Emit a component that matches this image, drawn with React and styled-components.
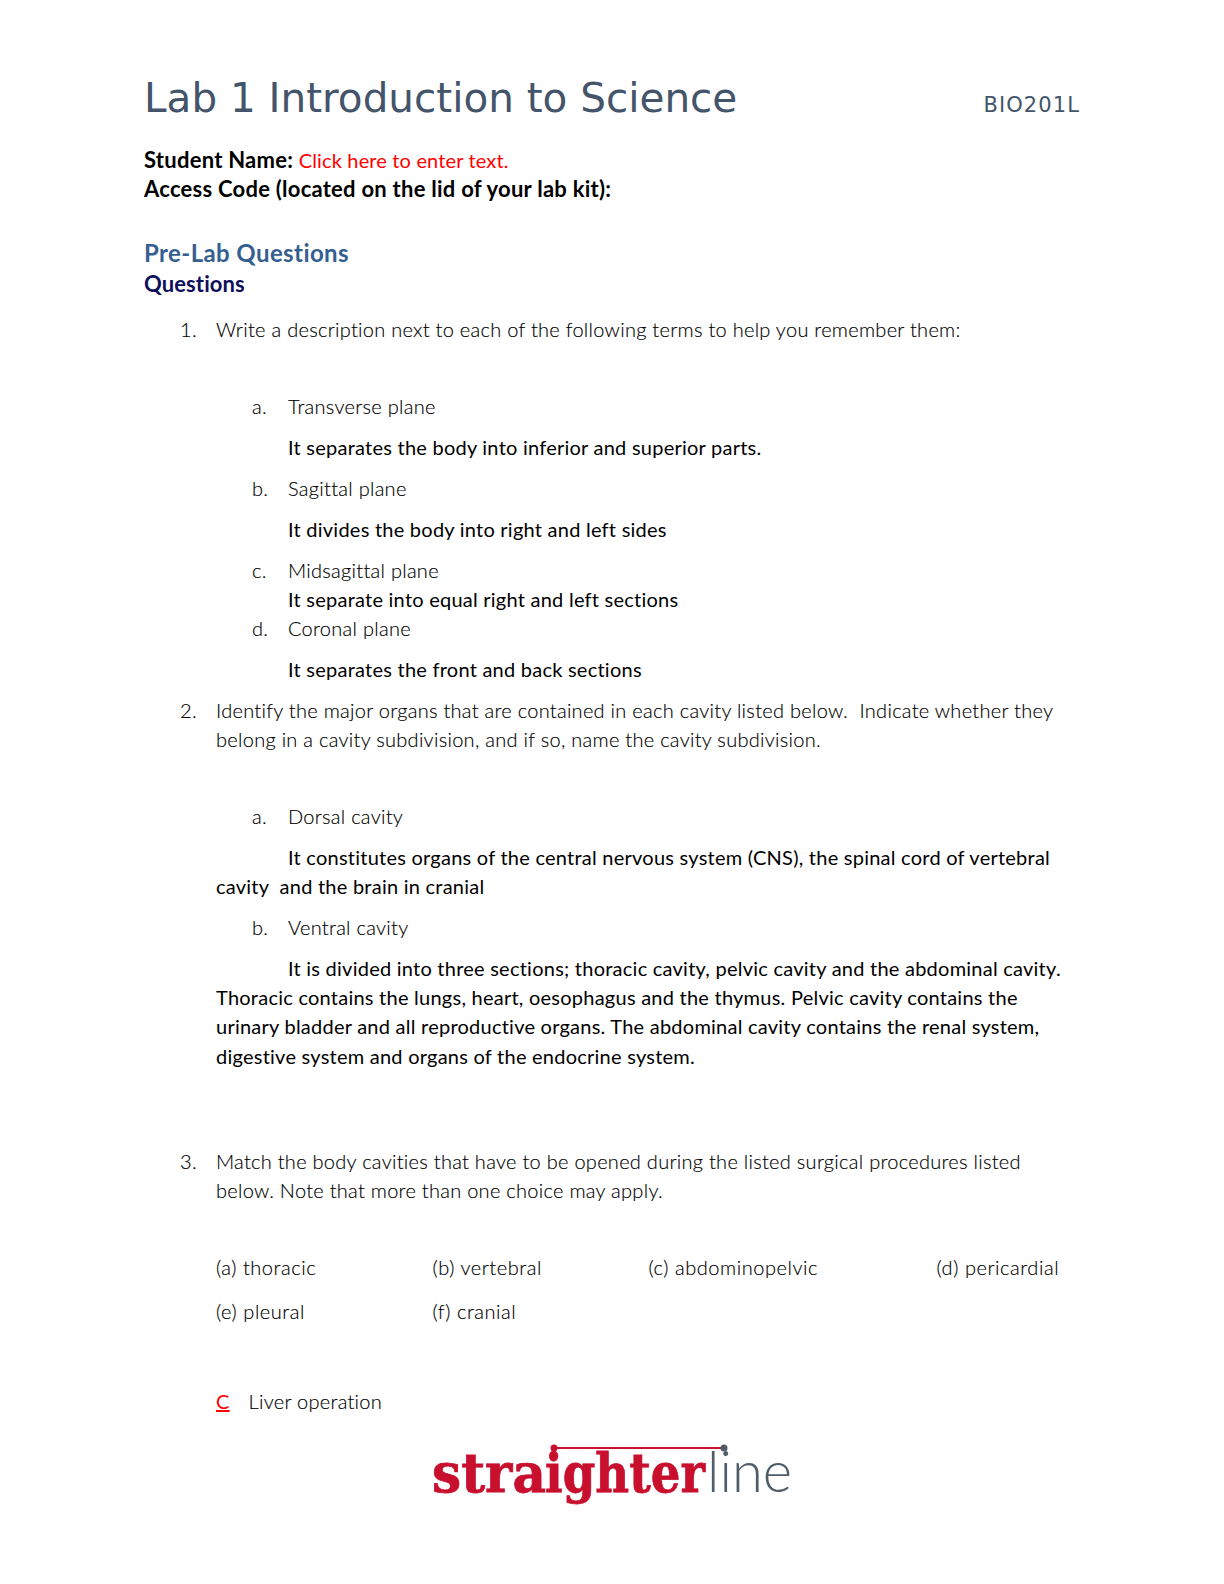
import styled, { createGlobalStyle } from "styled-components";

const GlobalStyle = createGlobalStyle`
  html, body {
    margin: 0;
    padding: 0;
    background: #fff;
  }
  body {
    font-family: "Lato", "Liberation Sans", sans-serif;
    color: #000;
  }
`;

const Page = styled.div`
  width: 1224px;
  height: 1584px;
  box-sizing: border-box;
  padding: 70px 144px 0 144px;
  overflow: hidden;
`;

const Header = styled.header`
  display: flex;
  justify-content: space-between;
  align-items: flex-end;
  height: 56px;
  margin-bottom: 19px;
`;

const Title = styled.h1`
  margin: 0;
  font: 400 40.5px/56px "DejaVu Sans", sans-serif;
  color: #44546a;
`;

const Course = styled.span`
  font: 400 21px/42px "DejaVu Sans", sans-serif;
  letter-spacing: 1.1px;
  color: #44546a;
`;

const Line = styled.div`
  height: 29.3px;
  line-height: 29.3px;
  font-size: 20px;
  white-space: nowrap;
  margin-top: ${(p) => p.$top || 0}px;
`;

const Strong = styled(Line)`
  font-size: 22px;
  font-weight: 700;
  letter-spacing: 0.25px;
`;

const Placeholder = styled.span`
  font-size: 20px;
  font-weight: 400;
  color: #f00;
  letter-spacing: 0.15px;
`;

const Section = styled(Strong)`
  font-size: 24px;
  letter-spacing: 0.4px;
  color: #365f91;
`;

const Sub = styled(Strong)`
  letter-spacing: 0.1px;
  color: #0f0f5c;
`;

const Item = styled(Line)`
  display: flex;
  font-weight: 300;
  letter-spacing: 0.28px;
  -webkit-text-stroke: 0.15px #000;
  padding-left: ${(p) => (p.$sub ? 108 : 36)}px;
`;

const Marker = styled.span`
  width: 36px;
  flex: none;
`;

const Answer = styled.div`
  margin-top: ${(p) => p.$top || 0}px;
  padding-left: 72px;
  font-size: 20px;
  line-height: 29.3px;
  white-space: nowrap;
  letter-spacing: 0.24px;
  text-indent: ${(p) => (p.$indent ? 72 : 0)}px;
`;

const SubAnswer = styled(Answer)`
  padding-left: 144px;
`;

const ChoiceGrid = styled.div`
  display: grid;
  grid-template-columns: 216.5px 216px 288px auto;
  row-gap: 14px;
  margin: ${(p) => p.$top || 0}px 0 0 72px;
  font-size: 20px;
  line-height: 29.3px;
  font-weight: 300;
  letter-spacing: 0.55px;
  -webkit-text-stroke: 0.15px #000;
`;

const Pick = styled.div`
  display: flex;
  margin: 61px 0 0 72px;
  font-size: 20px;
  line-height: 29.3px;
  font-weight: 300;
  letter-spacing: 0.28px;
  -webkit-text-stroke: 0.15px #000;
`;

const PickLetter = styled.span`
  width: 32.5px;
  font-weight: 400;
  color: #f00;
  -webkit-text-stroke: 0;
  text-decoration: underline;
`;

const Logo = styled.svg`
  display: block;
  margin: 28px 0 0 286px;
  overflow: visible;
`;

const Wordmark = () => (
  <Logo width="364" height="68" viewBox="0 0 364 68">
    <line x1="124" y1="4" x2="294" y2="4" stroke="#c8102e" strokeWidth="2" />
    <circle cx="124" cy="4" r="3.5" fill="#c8102e" />
    <circle cx="294" cy="4" r="3.5" fill="#4e5d68" />
    <text y="48" fontFamily="DejaVu Serif" fontWeight="700" fontSize="55" fill="#c8102e" stroke="#c8102e" strokeWidth="0.8">
      <tspan x="2" textLength="114" lengthAdjust="spacingAndGlyphs">stra</tspan>
      <tspan x="115" textLength="160" lengthAdjust="spacingAndGlyphs">ighter</tspan>
    </text>
    <text x="277" y="48" fontFamily="Lato" fontWeight="300" fontSize="57" fill="#4e5d68" textLength="85" lengthAdjust="spacingAndGlyphs">line</text>
  </Logo>
);

export default function App() {
  return (
    <>
      <GlobalStyle />
      <Page>
        <Header>
          <Title>Lab 1 Introduction to Science</Title>
          <Course>BIO201L</Course>
        </Header>
        <Strong>
          Student Name: <Placeholder>Click here to enter text.</Placeholder>
        </Strong>
        <Strong>Access Code (located on the lid of your lab kit):</Strong>
        <Section $top={34}>Pre-Lab Questions</Section>
        <Sub $top={2}>Questions</Sub>

        <Item $top={17}><Marker>1.</Marker>Write a description next to each of the following terms to help you remember them:</Item>

        <Item $sub $top={48}><Marker>a.</Marker>Transverse plane</Item>
        <SubAnswer $top={11}>It separates the body into inferior and superior parts.</SubAnswer>
        <Item $sub $top={12}><Marker>b.</Marker>Sagittal plane</Item>
        <SubAnswer $top={12}>It divides the body into right and left sides</SubAnswer>
        <Item $sub $top={11}><Marker>c.</Marker>Midsagittal plane</Item>
        <SubAnswer>It separate into equal right and left sections</SubAnswer>
        <Item $sub><Marker>d.</Marker>Coronal plane</Item>
        <SubAnswer $top={11}>It separates the front and back sections</SubAnswer>

        <Item $top={12}><Marker>2.</Marker>Identify the major organs that are contained in each cavity listed below.&nbsp; Indicate whether they</Item>
        <Item><Marker />belong in a cavity subdivision, and if so, name the cavity subdivision.</Item>

        <Item $sub $top={48}><Marker>a.</Marker>Dorsal cavity</Item>
        <Answer $top={11} $indent>
          It constitutes organs of the central nervous system (CNS), the spinal cord of vertebral<br />
          cavity&nbsp; and the brain in cranial
        </Answer>
        <Item $sub $top={12}><Marker>b.</Marker>Ventral cavity</Item>
        <Answer $top={11} $indent>
          It is divided into three sections; thoracic cavity, pelvic cavity and the abdominal cavity.<br />
          Thoracic contains the lungs, heart, oesophagus and the thymus. Pelvic cavity contains the<br />
          urinary bladder and all reproductive organs. The abdominal cavity contains the renal system,<br />
          digestive system and organs of the endocrine system.
        </Answer>

        <Item $top={76}><Marker>3.</Marker>Match the body cavities that have to be opened during the listed surgical procedures listed</Item>
        <Item><Marker />below. Note that more than one choice may apply.</Item>

        <ChoiceGrid $top={48}>
          <span>(a) thoracic</span>
          <span>(b) vertebral</span>
          <span>(c) abdominopelvic</span>
          <span>(d) pericardial</span>
          <span>(e) pleural</span>
          <span>(f) cranial</span>
        </ChoiceGrid>

        <Pick>
          <PickLetter>C</PickLetter>
          Liver operation
        </Pick>

        <Wordmark />
      </Page>
    </>
  );
}
